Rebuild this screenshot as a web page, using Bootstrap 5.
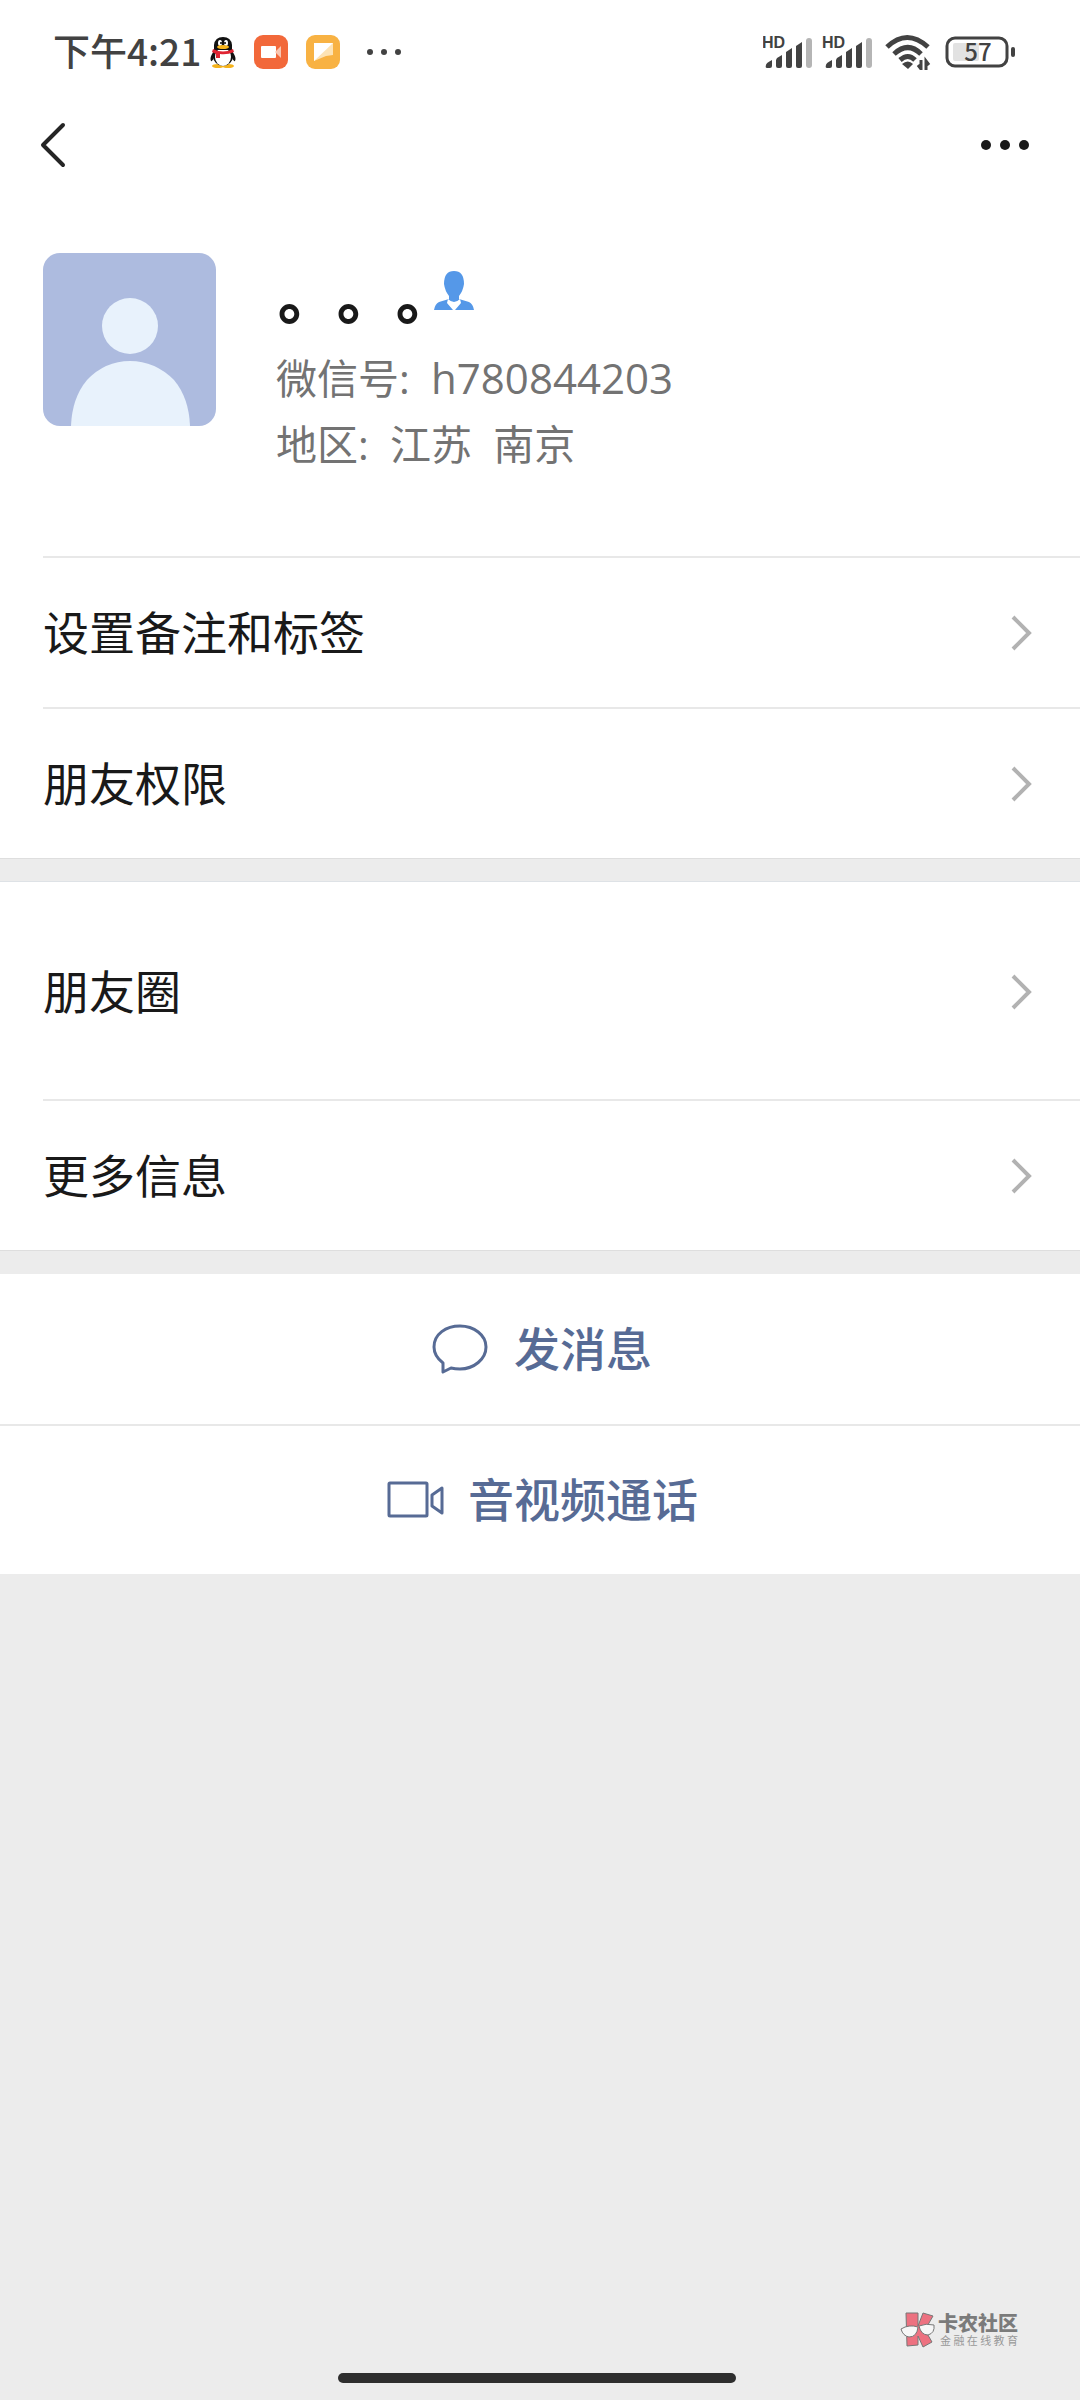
<!DOCTYPE html>
<html lang="zh-CN">
<head>
<meta charset="utf-8">
<meta name="viewport" content="width=device-width, initial-scale=1">
<title>个人资料</title>
<link href="https://cdn.jsdelivr.net/npm/bootstrap@5.3.0/dist/css/bootstrap.min.css" rel="stylesheet">
<style>
body{background:#ececec;color:#191919;font-family:"Noto Sans CJK SC",sans-serif}
svg{display:block;flex:none}
.status{height:104px;padding:0 64px 0 53px;color:#424242}
.clock{font-size:37px;line-height:48px;font-weight:500;padding-bottom:4px}
.tray{gap:17px;margin-left:9px}
.radio-icons{gap:8px;margin-right:11px}
.pct{font:500 24px/30px "Noto Sans CJK SC",sans-serif}
.topnav{height:82px;padding:0 50px 0 39px}
.bare{background:none;border:0;padding:0}
.profile{padding:67px 43px 79px}
.details{margin-left:60px}
.nick{height:92px;font-size:59px;line-height:64px;font-weight:900}
.nick-text{padding:9px 0 0 2px;text-spacing-trim:space-all}
.nick svg{margin-left:-21px}
.meta{font-family:"Open Sans","Noto Sans CJK SC",sans-serif;font-size:41px;line-height:66px;color:#737373;white-space:pre}
.wxid{font-size:42px}
.cell{height:151px;padding-right:48px;border-top:2px solid #e8e8e8;color:#191919;font-size:46px;line-height:60px;text-decoration:none}
.cells{padding-left:43px}
.cells .label-text{padding:0 0 6px}
.first-plain{border-top-color:transparent}
.tall{height:217px}
.gap-band{height:24px;background:#ececec;border-top:1px solid #dedede}
.act{height:150px;gap:26px;padding-left:4px;color:#576b95;font-size:46px;line-height:60px;font-weight:500}
.act + .act{gap:24px;border-top:2px solid #e8e8e8}
.act .label-text{padding-bottom:6px}
.brand{padding:0 62px 0 0;gap:2px;color:#7b7b7b}
.brand-name{font-size:20px;line-height:20px;font-weight:900}
.brand-sub{font-size:11px;line-height:14px;text-align:justify;text-align-last:justify;color:#999;width:80px;padding-left:2px}
.homebar-wrap{padding:24px 6px 17px 0}
.homebar{width:37%;height:10px;border-radius:5px;background:#2e2e2e}
</style>
</head>
<body>
<div class="d-flex flex-column min-vh-100">
<div class="bg-white">
<header>
<div class="status d-flex align-items-center justify-content-between">
<div class="d-flex align-items-center">
<span class="clock">下午4:21</span>
<div class="tray d-flex align-items-center">
<svg width="26" height="32" viewBox="0 0 26 32"><ellipse cx="8" cy="30" rx="6" ry="2" fill="#f5b21a"/><ellipse cx="18" cy="30" rx="6" ry="2" fill="#f5b21a"/><path d="M5 14Q-1 21 1 25Q2 26 4 22ZM21 14Q27 21 25 25Q24 26 22 22Z" fill="#111"/><ellipse cx="13" cy="20" rx="10" ry="10" fill="#111"/><ellipse cx="13" cy="21" rx="8" ry="9" fill="#fff"/><path d="M4 14V9Q5 1 13 1T22 9V14Z" fill="#111"/><ellipse cx="10" cy="7" rx="2" ry="3" fill="#fff"/><ellipse cx="16" cy="7" rx="2" ry="3" fill="#fff"/><circle cx="11" cy="7" r="1"/><circle cx="15" cy="7" r="1"/><ellipse cx="13" cy="11" rx="6" ry="2" fill="#f7b51c"/><path d="M3 13Q13 18 23 13L24 16Q17 19 10 18V22H6V18L2 16Z" fill="#e02432"/></svg>
<svg width="36" height="36" viewBox="0 0 36 36"><rect x="1" y="1" width="34" height="34" rx="9" fill="#f2683a"/><rect x="8" y="12" width="15" height="12" rx="1" fill="#fff"/><path d="M22 18L28 12V24Z" fill="#f9c5b0"/></svg>
<svg width="36" height="36" viewBox="0 0 36 36"><rect x="0" y="1" width="34" height="34" rx="9" fill="#f8b243"/><path d="M8 9H27V21L20 22L8 27Z" fill="#fde3b5"/><path d="M8 9H27L8 27Z" fill="#fff"/></svg>
<svg class="ms-1" width="42" height="12" viewBox="0 0 42 12" fill="#424242"><circle cx="7" cy="6" r="3"/><circle cx="21" cy="6" r="3"/><circle cx="35" cy="6" r="3"/></svg>
</div>
</div>
<div class="d-flex align-items-center">
<div class="radio-icons d-flex align-items-center">
<svg width="112" height="36" viewBox="0 0 112 36" fill="#424242"><defs><g id="sig"><text x="-1" y="14" font-family="Liberation Sans" font-weight="700" font-size="16">HD</text><path d="M3 31Q3 29 9 26V32Q9 34 7 34H4Q2 34 3 31ZM14 24L19 21V32Q19 34 17 34H15Q13 34 13 32V26ZM23 18L29 14V32Q29 34 27 34H25Q23 34 23 32ZM33 12L39 8V32Q39 34 37 34H35Q33 34 33 32Z"/><rect x="43" y="4" width="6" height="30" rx="3" fill="#b5b5b5"/></g></defs><use href="#sig"/><use href="#sig" x="60"/></svg>
<svg width="50" height="36" viewBox="0 0 50 36" fill="none" stroke="#424242" stroke-width="5"><path d="M4 13Q24-6 45 13M11 20Q25 7 38 20M17 26Q25 19 32 26"/><path d="M19 30Q25 25 30 30L25 35Z" fill="#424242" stroke="none"/><path d="M38 26V35L35 31M43 36V27L46 31" stroke-width="3"/></svg>
</div>
<div class="position-relative">
<svg width="72" height="32" viewBox="0 0 72 32"><rect x="9" y="7" width="26" height="18" rx="2" fill="#e2e2e2"/><rect x="3" y="2" width="60" height="28" rx="8" fill="none" stroke="#424242" stroke-width="3"/><rect x="67" y="11" width="4" height="10" rx="2" fill="#424242"/></svg>
<span class="pct position-absolute top-0 start-0 w-100 text-center pe-1">57</span>
</div>
</div>
</div>
<nav class="topnav d-flex align-items-center justify-content-between">
<button class="bare" aria-label="返回"><svg width="28" height="48" viewBox="0 0 28 48" fill="none" stroke="#252525" stroke-width="4" stroke-linecap="round" stroke-linejoin="round"><path d="M24 4L4 24L24 44"/></svg></button>
<button class="bare" aria-label="更多"><svg width="50" height="12" viewBox="0 0 50 12" fill="#191919"><circle cx="6" cy="6" r="5"/><circle cx="25" cy="6" r="5"/><circle cx="44" cy="6" r="5"/></svg></button>
</nav>
</header>
<main>
<section class="profile d-flex align-items-start">
<svg width="173" height="173" viewBox="0 0 173 173" role="img" aria-label="头像"><defs><clipPath id="av"><rect width="173" height="173" rx="17"/></clipPath></defs><g clip-path="url(#av)"><rect width="173" height="173" fill="#adbbdf"/><circle cx="87" cy="73" r="28" fill="#e8f2fc"/><path d="M28 173Q29 145 44 127Q62 108 87 108T131 127Q146 145 147 173Z" fill="#e8f2fc"/></g></svg>
<div class="details">
<div class="nick d-flex align-items-start"><span class="nick-text">。。。</span><svg class="mt-3" width="40" height="44" viewBox="0 0 40 44"><path d="M20 2Q30 2 30 15Q29 22 25 27V30L35 33Q39 35 40 41H0Q1 35 5 33L15 30V27Q11 22 10 15Q10 2 20 2Z" fill="#5598e8"/><path d="M14 30Q20 36 26 30L27 34L21 41H19L13 34Z" fill="#fff"/></svg></div>
<div class="meta">微信号:  <span class="wxid">h780844203</span></div>
<div class="meta">地区:  江苏  南京</div>
</div>
</section>
<div class="cells">
<a href="#" class="cell d-flex align-items-center justify-content-between"><span class="label-text">设置备注和标签</span><svg width="22" height="38" viewBox="0 0 22 38" fill="none" stroke="#b2b2b2" stroke-width="4"><path d="M3 3L19 19L3 35"/></svg></a>
<a href="#" class="cell d-flex align-items-center justify-content-between"><span class="label-text">朋友权限</span><svg width="22" height="38" viewBox="0 0 22 38" fill="none" stroke="#b2b2b2" stroke-width="4"><path d="M3 3L19 19L3 35"/></svg></a>
</div>
<div class="gap-band border-bottom"></div>
<div class="cells">
<a href="#" class="cell first-plain tall d-flex align-items-center justify-content-between"><span class="label-text">朋友圈</span><svg width="22" height="38" viewBox="0 0 22 38" fill="none" stroke="#b2b2b2" stroke-width="4"><path d="M3 3L19 19L3 35"/></svg></a>
<a href="#" class="cell d-flex align-items-center justify-content-between"><span class="label-text">更多信息</span><svg width="22" height="38" viewBox="0 0 22 38" fill="none" stroke="#b2b2b2" stroke-width="4"><path d="M3 3L19 19L3 35"/></svg></a>
</div>
<div class="gap-band"></div>
<button class="bare act w-100 d-flex align-items-center justify-content-center"><svg width="56" height="52" viewBox="0 0 56 52" fill="none" stroke="#576b95" stroke-width="3" stroke-linejoin="round"><path d="M11 40Q2 33 2 24C2 11 14 3 28 3S54 12 54 24S42 46 28 46Q23 46 19 45L11 49Z"/></svg><span class="label-text">发消息</span></button>
<button class="bare act w-100 d-flex align-items-center justify-content-center"><svg width="58" height="40" viewBox="0 0 58 40" fill="none" stroke="#576b95" stroke-width="3" stroke-linejoin="round"><rect x="3" y="3" width="38" height="33" rx="1"/><path d="M46 15L56 8V33L46 26Z"/></svg><span class="label-text">音视频通话</span></button>
</main>
</div>
<footer class="mt-auto">
<div class="brand d-flex align-items-center justify-content-end">
<svg width="36" height="38" viewBox="0 0 36 38"><path d="M6 2H18V15L23 2L33 5L25 19L32 31L23 36L18 25V34L7 35Z" fill="#ed7180" stroke="#777" stroke-width="1"/><path d="M1 18Q9 13 18 16Q17 26 9 26Q3 25 1 18ZM19 15Q26 12 34 14Q35 22 28 24Q21 24 19 15Z" fill="#f7f7f7" stroke="#777" stroke-width="1"/></svg>
<div><div class="brand-name">卡农社区</div><div class="brand-sub">金融在线教育</div></div>
</div>
<div class="homebar-wrap d-flex justify-content-center"><div class="homebar"></div></div>
</footer>
</div>
<script src="https://cdn.jsdelivr.net/npm/bootstrap@5.3.0/dist/js/bootstrap.bundle.min.js"></script>
</body>
</html>
